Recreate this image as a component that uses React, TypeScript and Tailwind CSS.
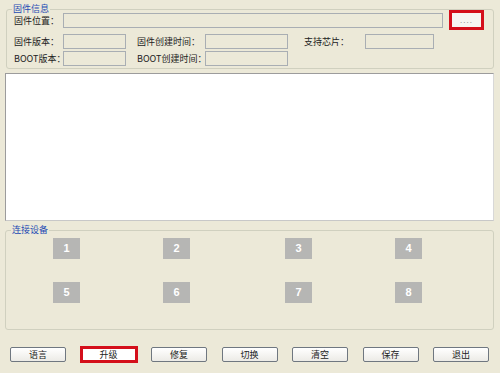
import React from "react";

const font = { fontFamily: '"Noto Sans CJK SC", "Liberation Sans", sans-serif' };

const Field = ({ w }: { w: string }) => (
  <div className={`${w} h-[15px] border border-[#A9AEB3] bg-[#ECE9D8]`} />
);

const Label = ({ text, w }: { text: string; w: string }) => (
  <div className={`${w} text-[9px] leading-[15px] text-[#222] whitespace-nowrap`}>{text}</div>
);

const GroupTitle = ({ text }: { text: string }) => (
  <span className="absolute left-[5px] -top-[7px] bg-[#ECE9D8] px-px text-[9px] leading-[12px] text-[#1F4BB4]">
    {text}
  </span>
);

const Tile = ({ n, ml }: { n: number; ml: string }) => (
  <div
    className={`${ml} w-[27px] h-[21px] bg-[#B6B6B4] flex items-center justify-center text-[11px] font-bold text-white`}
    style={{ fontFamily: '"Liberation Sans", sans-serif' }}
  >
    {n}
  </div>
);

const Btn = ({ text }: { text: string }) => (
  <div className="w-[56px] h-[15px] rounded-[2px] border border-[#6F7780] bg-gradient-to-b from-white to-[#ECEBE6] flex items-center justify-center text-[9px] text-[#222]">
    {text}
  </div>
);

export default function App() {
  return (
    <div className="w-[500px] h-[373px] bg-[#ECE9D8] overflow-hidden flex flex-col" style={font}>
      {/* 固件信息 */}
      <div className="relative ml-[6px] mt-[9px] w-[488px] h-[60px] rounded-[3px] border border-[#D0D0BF] flex flex-col">
        <GroupTitle text="固件信息" />
        <div className="flex items-center h-[20px] pl-[7px]">
          <Label text="固件位置：" w="w-[49px]" />
          <Field w="w-[380px]" />
          <div className="ml-[6px] w-[35px] h-[20px] border-[3px] border-[#D40F1B] bg-[#F6F6F2] flex items-center justify-center">
            <span className="text-[8px] leading-none text-[#9A9A9A] tracking-[1px]">....</span>
          </div>
        </div>
        <div className="flex items-center h-[15px] mt-[4px] pl-[7px]">
          <Label text="固件版本：" w="w-[49px]" />
          <Field w="w-[63px]" />
          <Label text="固件创建时间：" w="ml-[11px] w-[68px]" />
          <Field w="w-[83px]" />
          <Label text="支持芯片：" w="ml-[16px] w-[61px]" />
          <Field w="w-[69px]" />
        </div>
        <div className="flex items-center h-[15px] mt-[2px] pl-[7px]">
          <Label text="BOOT版本：" w="w-[49px]" />
          <Field w="w-[63px]" />
          <Label text="BOOT创建时间：" w="ml-[11px] w-[68px]" />
          <Field w="w-[83px]" />
        </div>
      </div>

      {/* log area */}
      <div className="ml-[5px] mt-[4px] w-[489px] h-[148px] border border-[#9C9C9C] border-r-[#D8D8D8] border-b-[#C8C8C8] bg-white" />

      {/* 连接设备 */}
      <div className="relative ml-[5px] mt-[9px] w-[489px] h-[100px] rounded-[3px] border border-[#D0D0BF] flex flex-col">
        <GroupTitle text="连接设备" />
        <div className="flex mt-[7px]">
          <Tile n={1} ml="ml-[47px]" />
          <Tile n={2} ml="ml-[83px]" />
          <Tile n={3} ml="ml-[95px]" />
          <Tile n={4} ml="ml-[83px]" />
        </div>
        <div className="flex mt-[23px]">
          <Tile n={5} ml="ml-[47px]" />
          <Tile n={6} ml="ml-[83px]" />
          <Tile n={7} ml="ml-[95px]" />
          <Tile n={8} ml="ml-[83px]" />
        </div>
      </div>

      {/* buttons */}
      <div className="flex items-center mt-[17px] ml-[10px] h-[15px] gap-[14.5px]">
        <Btn text="语言" />
        <div className="-mx-px w-[58px] h-[17px] border-[3px] border-[#D40F1B] bg-white flex items-center justify-center text-[9px] text-[#222]">
          升级
        </div>
        <Btn text="修复" />
        <Btn text="切换" />
        <Btn text="清空" />
        <Btn text="保存" />
        <Btn text="退出" />
      </div>
    </div>
  );
}
